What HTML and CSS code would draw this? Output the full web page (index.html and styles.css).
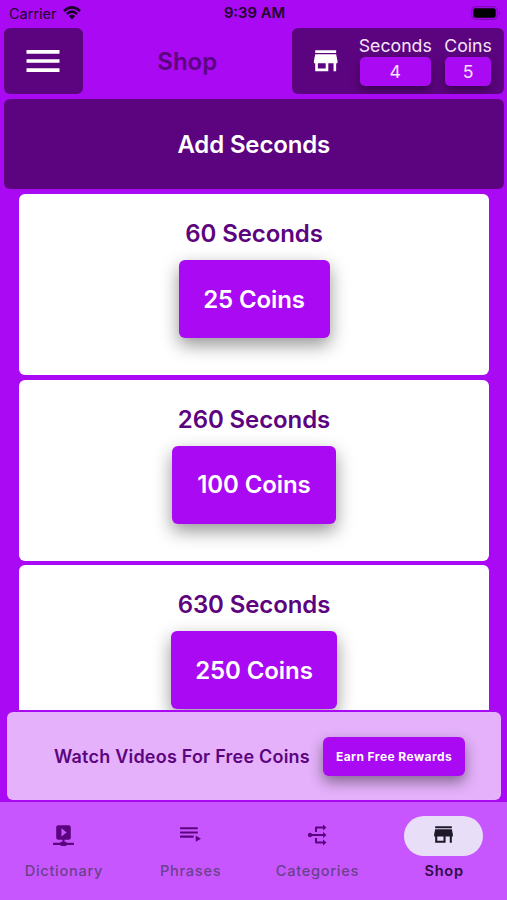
FILE: index.html
```html
<!DOCTYPE html>
<html lang="en">
<head>
<meta charset="utf-8">
<title>Shop</title>
<link rel="stylesheet" href="styles.css">
</head>
<body>
<div class="app">
  <div class="status">
    <div class="carrier"><span>Carrier</span>
      <svg class="wifi" viewBox="0 0 18 14"><path d="M1 5.100Q9-2.300 17 5.100M3.800 8Q9 3.400 14.200 8" fill="none" stroke="currentColor" stroke-width="2.600"/><path d="M5.800 10Q9 7.400 12.200 10L9 13.400z" fill="currentColor"/></svg>
    </div>
    <div class="time">9:39 AM</div>
    <div class="power"><svg class="battery" viewBox="0 0 30 14"><rect x=".7" y=".7" width="25.600" height="12.600" rx="4" fill="none" stroke="#7f08b8" stroke-width="1.200"/><rect x="2.300" y="2.300" width="22.400" height="9.400" rx="2.200"/><path d="M27.800 5v4q1.600-.6 1.600-2t-1.600-2" fill="#7f08b8"/></svg></div>
  </div>
  <header class="header">
    <div class="menu"><svg viewBox="0 0 24 24"><path d="M3 6h18v2H3zM3 11h18v2H3zM3 16h18v2H3z"/></svg></div>
    <h1 class="title">Shop</h1>
    <div class="wallet">
      <svg class="store" viewBox="0 0 24 24"><path d="M20 4H4v2h16V4zm1 10v-2l-1-5H4l-1 5v2h1v6h10v-6h4v6h2v-6h1zm-9 4H6v-4h6v4z"/></svg>
      <div class="stat seconds"><span>Seconds</span><b>4</b></div>
      <div class="stat coins"><span>Coins</span><b>5</b></div>
    </div>
  </header>
  <div class="banner"><span>Add Seconds</span></div>
  <main class="list">
    <section class="card"><h2>60 Seconds</h2><button class="buy b25">25 Coins</button></section>
    <section class="card"><h2>260 Seconds</h2><button class="buy b100">100 Coins</button></section>
    <section class="card"><h2>630 Seconds</h2><button class="buy b250">250 Coins</button></section>
  </main>
  <div class="rewards"><span>Watch Videos For Free Coins</span><button class="earn">Earn Free Rewards</button></div>
  <nav class="tabs">
    <div class="tab"><i><svg viewBox="0 0 24 24"><path d="M17 3a2 2 0 0 1 2 2v10a2 2 0 0 1-2 2h-4v2h1a1 1 0 0 1 1 1h7v2h-7a1 1 0 0 1-1 1h-4a1 1 0 0 1-1-1H2v-2h7a1 1 0 0 1 1-1h1v-2H7a2 2 0 0 1-2-2V5a2 2 0 0 1 2-2h10m-7 3v8l5-4z"/></svg></i><span>Dictionary</span></div>
    <div class="tab"><i><svg viewBox="0 0 24 24"><path d="M19 9H2v2h17V9m0-4H2v2h17V5M2 15h13v-2H2v2m15-2v6l5-3z"/></svg></i><span>Phrases</span></div>
    <div class="tab"><i><svg viewBox="0 0 24 24"><path d="M5 12h14M11 9V4.500h8M11 15v4.500h8" fill="none" stroke="currentColor" stroke-width="2" stroke-linejoin="round"/><circle cx="5" cy="12" r="2.200"/><path d="M18 1.500v6l3.500-3zM18 9v6l3.500-3zM18 16.500v6l3.500-3z"/></svg></i><span>Categories</span></div>
    <div class="tab active"><i><svg viewBox="0 0 24 24"><path d="M20 4H4v2h16V4zm1 10v-2l-1-5H4l-1 5v2h1v6h10v-6h4v6h2v-6h1zm-9 4H6v-4h6v4z"/></svg></i><span>Shop</span></div>
  </nav>
</div>
</body>
</html>
```
FILE: styles.css
```css
* { box-sizing: border-box; }
body { margin: 0; font-family: Inter, "Liberation Sans", sans-serif; background: #a90af3; }
svg { display: block; fill: currentColor; }
h1, h2 { margin: 0; }
button { border: 0; padding: 0; font-family: inherit; color: #fff; background: #a90af3; display: block; }
.app { width: 507px; height: 900px; overflow: hidden; display: flex; flex-direction: column; }
.status { height: 28px; flex: none; display: grid; grid-template-columns: 1fr auto 1fr; align-items: center; color: #1c0329; font-size: 14.500px; padding: 0 6px 2px 9px; }
.carrier { display: flex; align-items: center; gap: 6px; }
.wifi { width: 18px; height: 14px; }
.time { font-weight: 600; font-size: 14.800px; margin-right: 1px; }
.power { display: flex; justify-content: flex-end; color: #000; }
.battery { width: 30px; height: 14px; }
.header { height: 66px; flex: none; display: flex; margin: 0 3px 0 3.500px; justify-content: space-between; }
.menu { width: 79px; border-radius: 6px; background: #5c047f; color: #fff; display: flex; align-items: center; justify-content: center; }
.menu svg { width: 44px; height: 44px; }
.title { width: 209px; text-align: center; line-height: 67px; font-size: 24px; font-weight: 600; color: #5c047f; }
.wallet { width: 212px; border-radius: 6px; background: #5c047f; color: #fff; display: flex; padding: 8px 12px 0 18px; overflow: hidden; }
.store { width: 31.500px; height: 31.500px; margin-top: 9px; }
.stat { display: flex; flex-direction: column; align-items: center; text-align: center; font-size: 17.700px; line-height: 20px; color: #f6e4fd; }
.stat b { font-weight: 400; height: 29px; line-height: 30px; margin-top: 1px; border-radius: 5px; background: #a90af3; box-shadow: 0 5px 10px rgba(0,0,0,.35); }
.seconds { width: 74px; margin-left: 17px; }
.seconds b { width: 71px; }
.coins { width: 48px; margin-left: 12px; }
.coins b { width: 46px; }
.banner { flex: none; height: 90.500px; margin: 4.500px 3px 0 3.500px; padding-top: 1px; border-radius: 6px; background: #5c047f; color: #fff; font-size: 24px; font-weight: 600; letter-spacing: -.15px; display: flex; align-items: center; justify-content: center; }
.list { flex: none; height: 520.500px; padding: 5px 18px 0 19px; overflow: hidden; display: flex; flex-direction: column; gap: 4.700px; }
.card { flex: none; height: 181px; border-radius: 6px; background: #fff; display: flex; flex-direction: column; align-items: center; }
.card h2 { margin-top: 25px; line-height: 30px; font-size: 24px; font-weight: 600; letter-spacing: -.1px; color: #5c047f; }
.buy { height: 78px; margin-top: 11px; border-radius: 6px; font-size: 24px; font-weight: 600; letter-spacing: -.1px; box-shadow: 0 7px 18px rgba(0,0,0,.42); }
.b25 { width: 151px; }
.b100 { width: 164px; }
.b250 { width: 166px; }
.rewards { flex: none; height: 88px; margin: 2.500px 6px 0 7px; border-radius: 6px; background: #e4b1fa; color: #5c047f; display: flex; align-items: center; padding-left: 47px; font-size: 18px; font-weight: 600; letter-spacing: .21px; white-space: nowrap; }
.rewards span { width: 269px; }
.earn { width: 142px; height: 39px; border-radius: 6px; font-size: 12px; font-weight: 700; letter-spacing: .43px; box-shadow: 0 6px 14px rgba(0,0,0,.42); }
.tabs { flex: 1; margin-top: 2px; background: #c856ff; display: grid; grid-template-columns: repeat(4, 1fr); }
.tab { display: flex; flex-direction: column; align-items: center; padding-top: 14px; color: #5c047f; }
.tab i { width: 79px; height: 40px; border-radius: 20px; display: flex; align-items: center; justify-content: center; }
.tab svg { width: 25px; height: 25px; margin-top: -3px; }
.tab span { margin-top: 5px; line-height: 20px; font-size: 14.600px; font-weight: 500; letter-spacing: .7px; margin-left: 1px; color: #68418a; }
.tab:nth-child(3) svg { width: 24px; height: 24px; }
.active { color: #1d192b; }
.active i { background: #e8def8; }
.tab.active span { color: #310c45; font-weight: 600; }
```
